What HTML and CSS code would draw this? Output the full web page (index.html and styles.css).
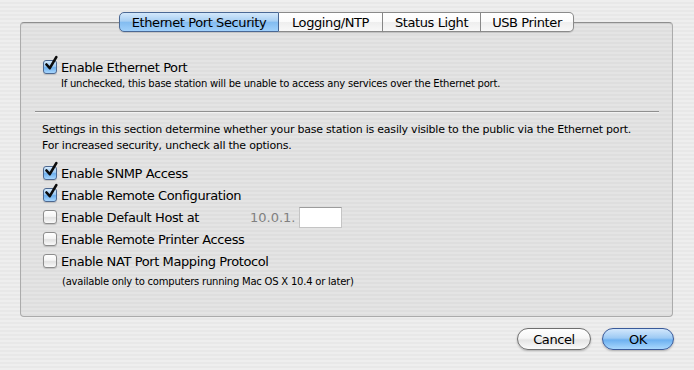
FILE: index.html
```html
<!DOCTYPE html>
<html lang="en">
<head>
    <meta charset="UTF-8">
    <title>Ethernet Port Security</title>
    <link rel="stylesheet" href="styles.css">
</head>
<body>
    <div class="window">
        <!-- Tab strip sits on top of the group box border -->
        <div class="tabs">
            <span class="tab selected">Ethernet Port Security</span>
            <span class="tab">Logging/NTP</span>
            <span class="tab">Status Light</span>
            <span class="tab">USB Printer</span>
        </div>

        <div class="panel">
            <label class="row">
                <span class="check on"><svg viewBox="0 0 14 16" width="14" height="16"><path d="M2.5 9.5 L5.8 13.2 L12.3 2.2" fill="none" stroke="#0c0c0c" stroke-width="2.6" stroke-linecap="round" stroke-linejoin="round"/></svg></span>
                Enable Ethernet Port
            </label>
            <p class="hint">If unchecked, this base station will be unable to access any services over the Ethernet port.</p>

            <div class="separator"></div>

            <p class="info">Settings in this section determine whether your base station is easily visible to the public via the Ethernet port.<br>For increased security, uncheck all the options.</p>

            <div class="options">
                <label class="row">
                    <span class="check on"><svg viewBox="0 0 14 16" width="14" height="16"><path d="M2.5 9.5 L5.8 13.2 L12.3 2.2" fill="none" stroke="#0c0c0c" stroke-width="2.6" stroke-linecap="round" stroke-linejoin="round"/></svg></span>
                    Enable SNMP Access
                </label>
                <label class="row">
                    <span class="check on"><svg viewBox="0 0 14 16" width="14" height="16"><path d="M2.5 9.5 L5.8 13.2 L12.3 2.2" fill="none" stroke="#0c0c0c" stroke-width="2.6" stroke-linecap="round" stroke-linejoin="round"/></svg></span>
                    Enable Remote Configuration
                </label>
                <div class="row">
                    <span class="check"></span>
                    <span class="host-label">Enable Default Host at</span>
                    <span class="prefix">10.0.1.</span>
                    <span class="field"></span>
                </div>
                <label class="row">
                    <span class="check"></span>
                    Enable Remote Printer Access
                </label>
                <label class="row">
                    <span class="check"></span>
                    Enable NAT Port Mapping Protocol
                </label>
                <p class="note">(available only to computers running Mac OS X 10.4 or later)</p>
            </div>
        </div>

        <div class="buttons">
            <button class="btn">Cancel</button>
            <button class="btn default">OK</button>
        </div>
    </div>
</body>
</html>
```

FILE: styles.css
```css
body {
    margin: 0;
    font-family: "DejaVu Sans", sans-serif;
    color: #000;
    background: repeating-linear-gradient(to bottom, #eeeeee 0, #eeeeee 2px, #e8e8e8 2px, #e8e8e8 4px);
    height: 370px;
    overflow: hidden;
}

.window {
    padding-top: 12px;
}

/* Tabs */
.tabs {
    position: relative;
    z-index: 1;
    display: flex;
    justify-content: center;
    margin: 0 21px 0 20px;
    height: 20px;
}

.tab {
    display: flex;
    align-items: center;
    justify-content: center;
    box-sizing: border-box;
    height: 20px;
    font-size: 13px;
    letter-spacing: -0.4px;
    border: 1px solid #8a8a8a;
    border-left: none;
    background: linear-gradient(to bottom, #ffffff 0%, #fbfbfb 50%, #eeeeee 51%, #f8f8f8 100%);
    box-shadow: 0 1px 1px rgba(0, 0, 0, 0.15);
}

.tab:nth-child(1) { width: 160px; }
.tab:nth-child(2) { width: 104px; }
.tab:nth-child(3) { width: 98px; }
.tab:nth-child(4) { width: 93px; }

.tab:first-child {
    border-left: 1px solid #5a6f93;
    border-radius: 5px 0 0 5px;
}

.tab:last-child {
    border-radius: 0 5px 5px 0;
}

.tab.selected {
    border-color: #4a6894;
    background: linear-gradient(to bottom, #d3e8fb 0%, #a8cff3 45%, #83bcf0 52%, #9fd0fb 100%);
}

/* Group box */
.panel {
    margin: -10px 21px 0 20px;
    height: 295px;
    box-sizing: border-box;
    padding: 35px 0 0 22px;
    border: 1px solid #ababab;
    border-top-color: #8e8e8e;
    border-radius: 4px;
    background: rgba(0, 0, 0, 0.04);
    box-shadow: inset 0 1px 1px rgba(0, 0, 0, 0.08);
}

.row {
    display: flex;
    align-items: center;
    height: 18px;
    font-size: 13px;
    letter-spacing: -0.4px;
}

.check {
    position: relative;
    flex: none;
    box-sizing: border-box;
    width: 14px;
    height: 14px;
    margin-right: 4px;
    border: 1px solid #8d8d8d;
    border-radius: 3px;
    background: linear-gradient(to bottom, #ffffff 0%, #f4f4f4 45%, #e2e2e2 55%, #fafafa 100%);
    box-shadow: 0 1px 1px rgba(0, 0, 0, 0.15);
}

.check.on {
    border-color: #4d6890;
    background: linear-gradient(to bottom, #d6ebfd 0%, #9bc9f3 45%, #6eb0ee 55%, #a8d6fd 100%);
}

.check svg {
    position: absolute;
    left: 0;
    top: -6px;
}

.hint,
.info,
.note {
    margin: 0;
}

.hint,
.note {
    font-size: 10px;
    letter-spacing: -0.22px;
    line-height: 14px;
}

.hint {
    padding-left: 18px;
    margin-top: 1px;
}

.separator {
    height: 1px;
    background: #8f8f8f;
    margin: 20px 13px 0 -8px;
    box-shadow: 0 1px 0 rgba(255, 255, 255, 0.5);
}

.info {
    margin: 10px 0 0 -1px;
    font-size: 11px;
    letter-spacing: -0.22px;
    line-height: 16px;
}

.options {
    margin-top: 8px;
}

.options .row {
    height: 22px;
}

.host-label {
    width: 189px;
}

.prefix {
    color: #808080;
    letter-spacing: 0;
}

.field {
    width: 43px;
    height: 21px;
    box-sizing: border-box;
    margin-left: 4px;
    background: #fff;
    border: 1px solid #c4c4c4;
    border-top-color: #9c9c9c;
}

.note {
    padding-left: 19px;
    margin-top: 3px;
}

/* Dialog buttons */
.buttons {
    display: flex;
    justify-content: flex-end;
    gap: 11px;
    margin: 11px 20px 0 0;
}

.btn {
    width: 74px;
    height: 22px;
    padding: 0;
    font-family: "DejaVu Sans", sans-serif;
    font-size: 13px;
    letter-spacing: -0.4px;
    color: #000;
    border: 1px solid #6f6f6f;
    border-radius: 11px;
    background: linear-gradient(to bottom, #ffffff 0%, #f6f6f6 45%, #e4e4e4 55%, #fbfbfb 100%);
    box-shadow: 0 1px 2px rgba(0, 0, 0, 0.25);
}

.btn.default {
    width: 72px;
    border-color: #3a5a9a;
    background: linear-gradient(to bottom, #d2e7fc 0%, #9dcaf4 45%, #6db0f0 55%, #a9d8fd 100%);
}
```
